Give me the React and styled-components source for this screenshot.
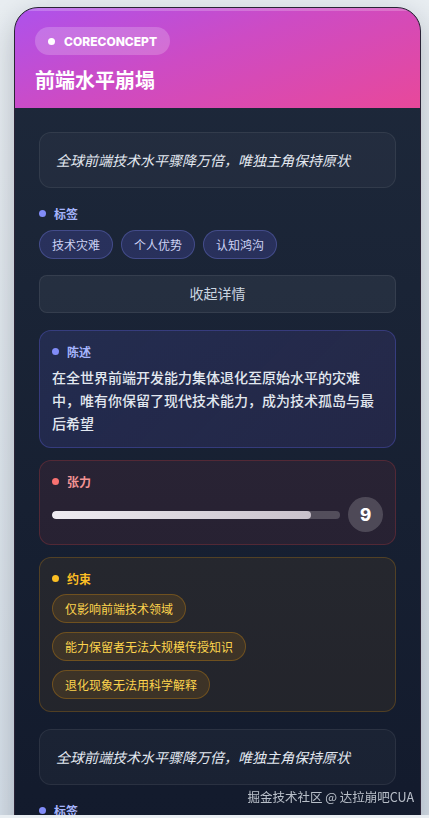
import React, { useState } from 'react';
import styled, { createGlobalStyle, css } from 'styled-components';

const GlobalStyle = createGlobalStyle`
    html, body {
        margin: 0;
        padding: 0;
        overflow: hidden;
        background: linear-gradient(180deg, #e9eef2 0%, #d6dfe8 100%);
        font-family: Inter, "Noto Sans CJK SC", sans-serif;
    }
    * {
        box-sizing: border-box;
    }
`;

const Viewport = styled.div`
    height: calc(100vh - 3px);
    overflow: hidden;
    padding: 7px 8px 0 14px;
`;

const Card = styled.div`
    border-radius: 24px;
    border: 1px solid #2a2336;
    overflow: hidden;
    background: linear-gradient(180deg, #1e293b 0px, #131b2d 780px, #0f172a 1400px);
    box-shadow: 0 10px 30px rgba(15, 23, 42, 0.25);
`;

const Header = styled.div`
    position: relative;
    padding: 19px 20px 15px;
    background: linear-gradient(160deg, #ad52ec 0%, #cd4bc4 45%, #e8489a 100%);

    &::before {
        content: '';
        position: absolute;
        left: 0;
        right: 0;
        top: 0;
        height: 3px;
        background: rgba(255, 255, 255, 0.22);
    }
`;

const Badge = styled.div`
    display: inline-flex;
    align-items: center;
    gap: 9px;
    height: 28px;
    padding: 0 13px;
    border-radius: 14px;
    background: rgba(255, 255, 255, 0.2);
    color: #fff;
    font-family: Inter, sans-serif;
    font-size: 12px;
    font-weight: 800;
`;

const BadgeDot = styled.span`
    width: 7px;
    height: 7px;
    border-radius: 50%;
    background: #fff;
`;

const Title = styled.h1`
    margin: 12px 0 0;
    color: #fff;
    font-family: "Noto Sans CJK SC", sans-serif;
    font-size: 20px;
    font-weight: 700;
    line-height: 26px;
`;

const Body = styled.div`
    display: flex;
    flex-direction: column;
    gap: 16px;
    padding: 24px;
`;

const Quote = styled.div`
    padding: 16px;
    border-radius: 12px;
    background: rgba(255, 255, 255, 0.03);
    border: 1px solid rgba(255, 255, 255, 0.07);
    color: #e2e8f0;
    font-family: "Noto Sans CJK SC", sans-serif;
    font-size: 14px;
    font-style: italic;
    font-weight: 400;
    line-height: 22px;
`;

const tones = {
    indigo: { dot: '#818cf8', text: '#a5b4fc' },
    red: { dot: '#f87171', text: '#f49494' },
    amber: { dot: '#fbbf24', text: '#fbbf24' },
};

const Label = styled.div`
    display: flex;
    align-items: center;
    gap: 8px;
    height: 18px;
    color: ${p => tones[p.$tone].text};
    font-family: "Noto Sans CJK SC", sans-serif;
    font-size: 12px;
    font-weight: 700;

    &::before {
        content: '';
        width: 7px;
        height: 7px;
        border-radius: 50%;
        background: ${p => tones[p.$tone].dot};
    }
`;

const TagRow = styled.div`
    display: flex;
    flex-wrap: wrap;
    gap: 8px;
    margin-top: 8px;
`;

const Tag = styled.span`
    padding: 5px 12px;
    border-radius: 999px;
    background: rgba(99, 102, 241, 0.2);
    border: 1px solid rgba(129, 140, 248, 0.3);
    color: #cdd3f5;
    font-family: "Noto Sans CJK SC", sans-serif;
    font-size: 12px;
    line-height: 17px;
`;

const ToggleButton = styled.button`
    width: 100%;
    padding: 9px 0 10px;
    border-radius: 8px;
    background: rgba(255, 255, 255, 0.05);
    border: 1px solid rgba(255, 255, 255, 0.08);
    color: #cbd5e1;
    font-family: "Noto Sans CJK SC", sans-serif;
    font-size: 14px;
    line-height: 17px;
    cursor: pointer;
`;

const Details = styled.div`
    display: flex;
    flex-direction: column;
    gap: 12px;
    margin: 1px 0 1px;
`;

const panelTones = {
    indigo: css`
        background: linear-gradient(135deg, rgba(99, 102, 241, 0.14), rgba(139, 92, 246, 0.1));
        border-color: rgba(99, 102, 241, 0.3);
    `,
    red: css`
        background: rgba(239, 68, 68, 0.08);
        border-color: rgba(239, 68, 68, 0.22);
    `,
    amber: css`
        background: rgba(245, 158, 11, 0.07);
        border-color: rgba(245, 158, 11, 0.22);
    `,
};

const Panel = styled.div`
    padding: 11px 12px 12px;
    border-radius: 12px;
    border: 1px solid;
    ${p => panelTones[p.$tone]}
`;

const Statement = styled.p`
    margin: 6px 0 0;
    color: #e2e8f0;
    font-family: "Noto Sans CJK SC", sans-serif;
    font-size: 14px;
    font-weight: 500;
    line-height: 23px;
`;

const MeterRow = styled.div`
    display: flex;
    align-items: center;
    gap: 8px;
    margin-top: 7px;
`;

const Track = styled.div`
    flex: 1;
    height: 8px;
    border-radius: 4px;
    background: rgba(255, 255, 255, 0.2);
    overflow: hidden;
`;

const Fill = styled.div`
    height: 100%;
    border-radius: 4px;
    background: linear-gradient(90deg, #eeebf1, #c9c1cb);
`;

const Score = styled.div`
    display: flex;
    align-items: center;
    justify-content: center;
    width: 35px;
    height: 35px;
    border-radius: 50%;
    background: rgba(255, 255, 255, 0.18);
    color: #fff;
    font-family: Inter, sans-serif;
    font-size: 17px;
    font-weight: 800;
`;

const ChipList = styled.div`
    display: flex;
    flex-direction: column;
    align-items: flex-start;
    gap: 9px;
    margin-top: 7px;
`;

const Chip = styled.span`
    padding: 5px 12px;
    border-radius: 999px;
    background: rgba(245, 158, 11, 0.12);
    border: 1px solid rgba(245, 158, 11, 0.28);
    color: #fcd34d;
    font-family: "Noto Sans CJK SC", sans-serif;
    font-size: 12px;
    line-height: 17px;
`;

const Watermark = styled.div`
    position: fixed;
    right: 15px;
    bottom: 12px;
    color: rgba(226, 232, 240, 0.8);
    font-family: "Noto Sans CJK SC", sans-serif;
    font-size: 12.5px;
    line-height: 18px;
    pointer-events: none;
`;

const concept = {
    type: 'coreConcept',
    title: '前端水平崩塌',
    summary: '全球前端技术水平骤降万倍，唯独主角保持原状',
    tags: ['技术灾难', '个人优势', '认知鸿沟'],
    statement: '在全世界前端开发能力集体退化至原始水平的灾难中，唯有你保留了现代技术能力，成为技术孤岛与最后希望',
    tension: 9,
    constraints: ['仅影响前端技术领域', '能力保留者无法大规模传授知识', '退化现象无法用科学解释'],
};

const ConceptBlock = ({ data, open, onToggle }) => (
    <>
        <Quote>{data.summary}</Quote>
        <div>
            <Label $tone="indigo">标签</Label>
            <TagRow>
                {data.tags.map(t => <Tag key={t}>{t}</Tag>)}
            </TagRow>
        </div>
        <ToggleButton onClick={onToggle}>{open ? '收起详情' : '展开详情'}</ToggleButton>
        {open && (
            <Details>
                <Panel $tone="indigo">
                    <Label $tone="indigo">陈述</Label>
                    <Statement>{data.statement}</Statement>
                </Panel>
                <Panel $tone="red">
                    <Label $tone="red">张力</Label>
                    <MeterRow>
                        <Track>
                            <Fill style={{ width: `${data.tension * 10}%` }} />
                        </Track>
                        <Score>{data.tension}</Score>
                    </MeterRow>
                </Panel>
                <Panel $tone="amber">
                    <Label $tone="amber">约束</Label>
                    <ChipList>
                        {data.constraints.map(c => <Chip key={c}>{c}</Chip>)}
                    </ChipList>
                </Panel>
            </Details>
        )}
    </>
);

const App = () => {
    const [open, setOpen] = useState(true);

    return (
        <>
            <GlobalStyle />
            <Viewport>
                <Card>
                    <Header>
                        <Badge>
                            <BadgeDot />
                            {concept.type.toUpperCase()}
                        </Badge>
                        <Title>{concept.title}</Title>
                    </Header>
                    <Body>
                        <ConceptBlock data={concept} open={open} onToggle={() => setOpen(!open)} />
                        <ConceptBlock data={concept} open={false} onToggle={() => {}} />
                    </Body>
                </Card>
            </Viewport>
            <Watermark>掘金技术社区 @ 达拉崩吧CUA</Watermark>
        </>
    );
};

export default App;
